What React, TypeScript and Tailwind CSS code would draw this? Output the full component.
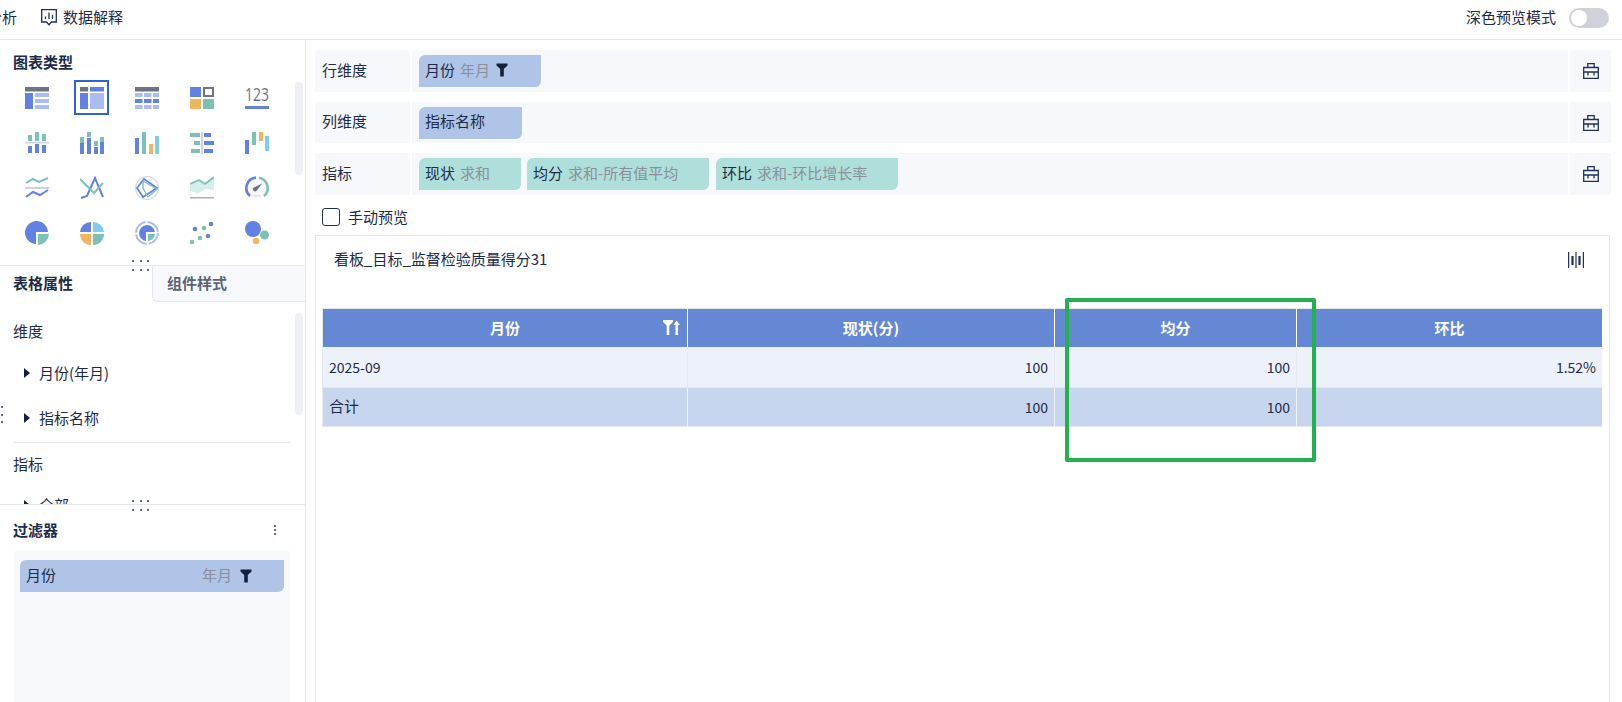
import type { ReactNode } from 'react';

const B = '#6282e3';
const L = '#a9bdf1';
const T = '#7dc0b6';
const O = '#f1b55f';
const G = '#6e7485';
const S = '#7fcbf1';
const LINE = '#cfd3de';

const Bar = ({ x, y, w, h, c }: { x: number; y: number; w: number; h: number; c: string }) => (
  <rect x={x} y={y} width={w} height={h} fill={c} />
);

const scatter: [number, number, string][] = [
  [2, 21, T],
  [10, 17, T],
  [18, 15, B],
  [5, 8, B],
  [14, 7, T],
  [21, 3, B],
];

const chartIcons: ReactNode[] = [
  <>
    <Bar x={0} y={1} w={24} h={4.5} c={G} />
    <Bar x={0} y={7} w={8} h={16} c={B} />
    <Bar x={10} y={7} w={14} h={4} c={L} />
    <Bar x={10} y={13} w={14} h={4} c={L} />
    <Bar x={10} y={19} w={14} h={4} c={L} />
  </>,
  <>
    <Bar x={0} y={1} w={8} h={4.5} c={G} />
    <Bar x={10} y={1} w={14} h={4.5} c={B} />
    <Bar x={0} y={7} w={8} h={16} c={B} />
    <Bar x={10} y={7} w={14} h={16} c={L} />
  </>,
  <>
    <Bar x={0} y={1} w={24} h={4.5} c={G} />
    {[7, 13, 19].map((y, r) =>
      [0, 9, 18].map((x) => <Bar key={`${x}-${y}`} x={x} y={y} w={x === 18 ? 6 : 7.5} h={4} c={r === 1 ? B : L} />),
    )}
  </>,
  <>
    <Bar x={0} y={1} w={11} h={10} c={B} />
    <rect x={14} y={2} width={9} height={8} fill="none" stroke={G} strokeWidth={2} />
    <Bar x={0} y={13} w={11} h={10} c={O} />
    <Bar x={13} y={13} w={11} h={10} c={T} />
  </>,
  <>
    <text x={0} y={15} fontSize={18} fill={G} fontFamily="Open Sans, sans-serif" textLength={24} lengthAdjust="spacingAndGlyphs">123</text>
    <Bar x={0} y={20} w={24} h={3} c={B} />
  </>,
  <>
    <Bar x={3} y={4} w={4} h={6} c={T} />
    <Bar x={10} y={1} w={4} h={9} c={T} />
    <Bar x={17} y={3} w={4} h={7} c={T} />
    <Bar x={0} y={11} w={24} h={1.5} c={LINE} />
    <Bar x={3} y={15} w={4} h={7} c={B} />
    <Bar x={10} y={13} w={4} h={9} c={B} />
    <Bar x={17} y={14} w={4} h={8} c={B} />
  </>,
  <>
    <Bar x={0} y={12} w={4} h={11} c={B} />
    <Bar x={0} y={6} w={4} h={6} c={T} />
    <Bar x={7} y={7} w={4} h={16} c={B} />
    <Bar x={7} y={1} w={4} h={5} c={T} />
    <Bar x={14} y={16} w={4} h={7} c={B} />
    <Bar x={14} y={10} w={4} h={5} c={T} />
    <Bar x={20} y={11} w={4} h={12} c={B} />
    <Bar x={20} y={6} w={4} h={5} c={T} />
  </>,
  <>
    <Bar x={0} y={7} w={4} h={16} c={B} />
    <Bar x={7} y={1} w={4} h={22} c={T} />
    <Bar x={14} y={13} w={4} h={10} c={O} />
    <Bar x={20} y={5} w={4} h={18} c={S} />
  </>,
  <>
    <Bar x={11} y={1} w={2} h={22} c={LINE} />
    <Bar x={0} y={2} w={10} h={4} c={T} />
    <Bar x={14} y={2} w={7} h={4} c={B} />
    <Bar x={4} y={10} w={6} h={4} c={T} />
    <Bar x={14} y={10} w={10} h={4} c={B} />
    <Bar x={1} y={18} w={9} h={4} c={T} />
    <Bar x={14} y={18} w={9} h={4} c={B} />
  </>,
  <>
    <Bar x={0} y={9} w={4} h={14} c={B} />
    <Bar x={7} y={1} w={4} h={13} c={T} />
    <Bar x={14} y={1} w={4} h={9} c={O} />
    <Bar x={20} y={5} w={4} h={15} c={S} />
  </>,
  <>
    <path d="M1 7 L8 3 L14 6 L23 2" fill="none" stroke={T} strokeWidth={2} />
    <Bar x={0} y={11} w={24} h={2} c={LINE} />
    <path d="M1 21 L8 16 L15 19 L23 14" fill="none" stroke={B} strokeWidth={2} />
  </>,
  <>
    <path d="M1 22 L7 20 L15 2 L23 21" fill="none" stroke={B} strokeWidth={2} />
    <path d="M0 3 L14 17 L23 7" fill="none" stroke={T} strokeWidth={2} />
  </>,
  <>
    <circle cx={12} cy={12} r={11.4} fill="none" stroke="#d3d7e2" strokeWidth={1.2} />
    <path d="M2 12 L9 3 L22 12 L8 21 Z" fill="none" stroke={B} strokeWidth={1.7} />
    <path d="M8 5 L22 13 L13 21 L8 12 Z" fill="none" stroke={T} strokeWidth={1.4} />
  </>,
  <>
    <path d="M0 8 L9 4 L15 8 L24 1 V14 L16 13 L8 17 L0 15 Z" fill="#d4efeb" />
    <path d="M0 8 L9 4 L15 8 L24 1" fill="none" stroke={T} strokeWidth={1.8} />
    <Bar x={0} y={21} w={24} h={1.5} c="#a9b0bf" />
  </>,
  <>
    <circle cx={12} cy={12} r={11} fill="#f6f7fa" />
    <path d="M5 20 A10.5 10.5 0 0 1 11 1.6" fill="none" stroke={B} strokeWidth={2.6} />
    <path d="M14 1.7 A10.5 10.5 0 0 1 19 20" fill="none" stroke={T} strokeWidth={2.6} />
    <path d="M8 12 L17 7.5 L11.5 15 A2.4 2.4 0 0 1 8 12 Z" fill={G} />
    <Bar x={8} y={19} w={8} h={1.3} c="#dfe2ea" />
  </>,
  <>
    <path d="M11 23 A11.5 11.5 0 1 1 23 11 H11 Z" fill={B} />
    <path d="M13 13 H24 A11.5 11.5 0 0 1 13 24 Z" fill={T} />
  </>,
  <>
    <path d="M11 1 A11 11 0 0 0 0 11 H11 Z" fill={B} />
    <path d="M13 1 A11 11 0 0 1 24 11 H13 Z" fill={S} />
    <path d="M0 13 A11 11 0 0 0 11 24 V13 Z" fill={O} />
    <path d="M13 13 H24 A11 11 0 0 1 13 24 Z" fill={T} />
  </>,
  <>
    <circle cx={12} cy={12} r={11} fill="none" stroke={L} strokeWidth={2} strokeDasharray="15.5 1.8" />
    <path d="M11 20 A8 8 0 1 1 20 11 H11 Z" fill={B} />
    <path d="M13 13 H20 A8 8 0 0 1 13 20 Z" fill={T} />
  </>,
  <>
    {scatter.map(([x, y, c]) => (
      <circle key={`${x}-${y}`} cx={x} cy={y} r={2.3} fill={c} />
    ))}
  </>,
  <>
    <circle cx={8} cy={8} r={8} fill={B} />
    <circle cx={19.5} cy={14} r={4.5} fill={T} />
    <circle cx={11} cy={20} r={3.2} fill={O} />
  </>,
];

const Funnel = ({ className }: { className: string }) => (
  <svg viewBox="0 0 12 14" className={className} fill="currentColor">
    <path d="M0.5 0.5 H11.5 V2.5 L7.8 6 V13.5 H4.2 V6 L0.5 2.5 Z" />
  </svg>
);

const Toolbox = () => (
  <svg viewBox="0 0 16 16" className="h-4 w-4 text-[#1f3158]" fill="none" stroke="currentColor" strokeWidth={1.3}>
    <path d="M0.7 4.5 H15.3 V15.3 H0.7 Z M4.8 4.5 V0.7 H11.2 V4.5 M0.7 9 H15.3 M5 9 V12.5 M11 9 V12.5" />
  </svg>
);

const Pill = ({ w, color, name, sub, funnel }: { w: string; color: string; name: string; sub?: string; funnel?: boolean }) => (
  <div className={`flex h-8 items-center gap-[5px] rounded-tl-md rounded-br-md pb-[2px] pl-[6px] ${w} ${color}`}>
    <span>{name}</span>
    {sub && <span className="text-[#8b8f9c]">{sub}</span>}
    {funnel && <Funnel className="ml-[1px] h-[14px] w-[12px] text-[#14213d]" />}
  </div>
);

const ConfigRow = ({ label, h, children }: { label: string; h: string; children: ReactNode }) => (
  <div className={`flex gap-[2px] ${h}`}>
    <div className="flex w-[95px] items-center bg-[#f7f8fc] pb-[2px] pl-[7px]">{label}</div>
    <div className="flex flex-1 items-center gap-[6px] bg-[#f7f8fc] pl-[7px]">{children}</div>
    <div className="flex w-[41px] items-center justify-center bg-[#f7f8fc]">
      <Toolbox />
    </div>
  </div>
);

const DragDots = ({ className }: { className: string }) => (
  <div className={`absolute grid grid-cols-3 gap-x-[5.5px] gap-y-[6.5px] ${className}`}>
    {[0, 1, 2, 3, 4, 5].map((i) => (
      <span key={i} className="h-[2px] w-[2px] rounded-full bg-[#2a3a5e]" />
    ))}
  </div>
);

const TreeItem = ({ label }: { label: string }) => (
  <div className="flex items-center gap-[9px] pl-[24px]">
    <span className="h-0 w-0 border-y-[5px] border-l-[6px] border-y-transparent border-l-[#14213d]" />
    <span>{label}</span>
  </div>
);

const HeadCell = ({ children, last }: { children: ReactNode; last?: boolean }) => (
  <div className={`relative flex items-center justify-center font-bold text-white ${last ? '' : 'border-r border-white'}`}>{children}</div>
);

const BodyCell = ({ children, line, left, last }: { children?: ReactNode; line: string; left?: boolean; last?: boolean }) => (
  <div className={`flex items-center px-[6px] text-[14px] ${left ? 'justify-start' : 'justify-end'} ${last ? '' : `border-r ${line}`}`}>{children}</div>
);

export default function App() {
  return (
    <div className="flex h-[702px] w-[1622px] flex-col overflow-hidden bg-white font-['Noto_Sans_CJK_SC','Noto_Sans',sans-serif] text-[15px] text-[#1c2b4a]">
      {/* 顶栏 */}
      <div className="flex h-[40px] shrink-0 items-center border-b border-[#e6e7ec] pb-[4px] pr-[13px]">
        <span className="-ml-[13px]">分析</span>
        <svg viewBox="0 0 16 17" className="ml-[24px] h-[17px] w-[16px] text-[#1f3158]" fill="none" stroke="currentColor" strokeWidth={1.3}>
          <path d="M0.7 0.7 H15.3 V13 H10.5 L8 15.8 L5.5 13 H0.7 Z" />
          <path d="M4.5 10 V7.5 M8 10 V3.5 M11.5 10 V6" />
        </svg>
        <span className="ml-[6px]">数据解释</span>
        <span className="ml-auto">深色预览模式</span>
        <span className="ml-[13px] flex h-[20px] w-[40px] items-center rounded-full bg-[#cfd2da] pl-[2px]">
          <span className="h-[16px] w-[16px] rounded-full bg-white" />
        </span>
      </div>

      <div className="flex min-h-0 flex-1">
        {/* 左侧面板 */}
        <aside className="relative flex w-[306px] shrink-0 flex-col border-r border-[#e6e7ec]">
          <DragDots className="left-[1px] top-[366px] !grid-cols-1 !gap-y-[5.5px] [&>span:nth-child(n+4)]:hidden" />
          <section className="relative h-[225px] shrink-0">
            <h3 className="pl-[13px] pt-[11px] font-bold leading-[22px]">图表类型</h3>
            <div className="mt-[2px] grid grid-cols-[repeat(5,55px)] grid-rows-[repeat(4,45px)] pl-[9px]">
              {chartIcons.map((icon, i) => (
                <div key={i} className="flex items-center justify-center">
                  <div className={i === 1 ? 'flex h-[35px] w-[35px] items-center justify-center border-2 border-[#2d62da]' : 'flex h-[35px] w-[35px] items-center justify-center'}>
                    <svg viewBox="0 0 24 24" className="h-6 w-6">{icon}</svg>
                  </div>
                </div>
              ))}
            </div>
            <div className="absolute right-[2px] top-[42px] h-[93px] w-2 rounded bg-[#eef0f5]" />
          </section>

          <section className="relative h-[239px] shrink-0 overflow-hidden border-t border-[#e6e7ec]">
            <div className="flex h-[36px]">
              <div className="flex w-[152px] items-center pb-[2px] pl-[13px] font-bold">表格属性</div>
              <div className="flex flex-1 items-center rounded-bl-md border-b border-l border-[#e6e7ec] bg-[#f8f9fd] pl-[14px] font-bold text-[#5b6478]">组件样式</div>
            </div>
            <div className="pl-[13px] pt-[19px] leading-[20px]">维度</div>
            <div className="mt-[22px] leading-[20px]">
              <TreeItem label="月份(年月)" />
            </div>
            <div className="mt-[25px] leading-[20px]">
              <TreeItem label="指标名称" />
            </div>
            <div className="ml-[14px] mr-[15px] mt-[14px] border-t border-[#e6e7ec]" />
            <div className="pl-[13px] pt-[11px] leading-[20px]">指标</div>
            <div className="mt-[21px] leading-[20px]">
              <TreeItem label="全部" />
            </div>
            <div className="absolute right-[2px] top-[47px] h-[102px] w-2 rounded bg-[#eef0f5]" />
          </section>

          <section className="relative flex min-h-0 flex-1 flex-col border-t border-[#e6e7ec] pl-[14px] pr-[15px]">
            <div className="flex items-center justify-between pt-[14px] leading-[22px]">
              <h3 className="-ml-[1px] font-bold">过滤器</h3>
              <div className="mr-[14px] flex flex-col gap-[2px]">
                <span className="h-[2px] w-[2px] rounded-full bg-[#2a3a5e]" />
                <span className="h-[2px] w-[2px] rounded-full bg-[#2a3a5e]" />
                <span className="h-[2px] w-[2px] rounded-full bg-[#2a3a5e]" />
              </div>
            </div>
            <div className="mb-[-2px] mt-[10px] flex-1 bg-[#f8f9fd] px-[6px] pt-[9px]">
              <div className="flex h-8 items-center rounded-tl-md rounded-br-md bg-[#afc4e7] pl-[6px]">
                <span className="pb-[2px]">月份</span>
                <span className="ml-auto pb-[2px] text-[#8b8f9c]">年月</span>
                <Funnel className="ml-[8px] mr-[32px] h-[14px] w-[12px] text-[#14213d]" />
              </div>
            </div>
          </section>
          <DragDots className="left-[132px] top-[220px]" />
          <DragDots className="left-[132px] top-[460px]" />
        </aside>

        {/* 主区域 */}
        <main className="flex min-w-0 flex-1 flex-col pl-[9px] pr-[11px] pt-[10px]">
          <div className="flex flex-col gap-[10px]">
            <ConfigRow label="行维度" h="h-[42px]">
              <Pill w="w-[122px]" color="bg-[#afc4e7]" name="月份" sub="年月" funnel />
            </ConfigRow>
            <ConfigRow label="列维度" h="h-[41px]">
              <Pill w="w-[103px]" color="bg-[#afc4e7]" name="指标名称" />
            </ConfigRow>
            <ConfigRow label="指标" h="h-[42px]">
              <Pill w="w-[102px]" color="bg-[#aedfda]" name="现状" sub="求和" />
              <Pill w="mr-[1px] w-[182px]" color="bg-[#aedfda]" name="均分" sub="求和-所有值平均" />
              <Pill w="w-[182px]" color="bg-[#aedfda]" name="环比" sub="求和-环比增长率" />
            </ConfigRow>
          </div>

          <label className="mt-[13px] flex h-[18px] items-center gap-[8px] pl-[7px]">
            <span className="h-[18px] w-[18px] rounded-[3px] border border-[#1f3158] bg-white" />
            <span>手动预览</span>
          </label>

          <div className="relative -mb-[3px] mr-[1px] mt-[9px] flex-1 border border-[#e6e7ec] pl-[6px] pr-[7px]">
            <div className="flex h-[48px] items-center justify-between pl-[12px] pr-[18px]">
              <span className="pb-[2px]">看板_目标_监督检验质量得分31</span>
              <svg viewBox="0 0 16 16" className="h-4 w-4 text-[#1f3158]" fill="currentColor">
                <path d="M0 0 H1.2 V16 H0 Z M14.8 0 H16 V16 H14.8 Z M7.4 0 H8.6 V16 H7.4 Z M3.4 4 H5.6 V13 H3.4 Z M10.4 4 H12.6 V13 H10.4 Z" />
              </svg>
            </div>

            <div className="mt-[24px] grid grid-cols-[365px_367px_242px_305px] border border-r-0 border-b-0 border-[#e6e7ec]">
              <div className="contents [&>div]:h-[38px] [&>div]:bg-[#6488d3]">
                <HeadCell>
                  月份
                  <svg viewBox="0 0 17 15" className="absolute right-[7px] top-[11px] h-[15px] w-[17px] text-white" fill="currentColor">
                    <path d="M0 0 H10 V2 L6.3 5.5 V15 H3.7 V5.5 L0 2 Z" />
                    <path d="M13.5 0.5 L17 5 H15 V15 H12.5 V5 H10.5 Z" />
                  </svg>
                </HeadCell>
                <HeadCell>现状(分)</HeadCell>
                <HeadCell>均分</HeadCell>
                <HeadCell last>环比</HeadCell>
              </div>
              <div className="contents [&>div]:h-[41px] [&>div]:border-b [&>div]:border-b-[#e3e7f2] [&>div]:bg-[#edf1fa]">
                <BodyCell left line="border-[#e3e7f2]">2025-09</BodyCell>
                <BodyCell line="border-[#e3e7f2]">100</BodyCell>
                <BodyCell line="border-[#e3e7f2]">100</BodyCell>
                <BodyCell last line="">1.52%</BodyCell>
              </div>
              <div className="contents [&>div]:h-[39px] [&>div]:border-b [&>div]:border-b-[#e3e7f2] [&>div]:bg-[#c8d5ef]">
                <BodyCell left line="border-[#edf1fa]"><span className="pb-[1px] text-[15px]">合计</span></BodyCell>
                <BodyCell line="border-[#edf1fa]">100</BodyCell>
                <BodyCell line="border-[#edf1fa]">100</BodyCell>
                <BodyCell last line="" />
              </div>
            </div>

            {/* 标注框 */}
            <div className="absolute left-[749px] top-[62px] h-[164px] w-[251px] rounded-[2px] border-[4px] border-[#22b14c]" />
          </div>
        </main>
      </div>
    </div>
  );
}
